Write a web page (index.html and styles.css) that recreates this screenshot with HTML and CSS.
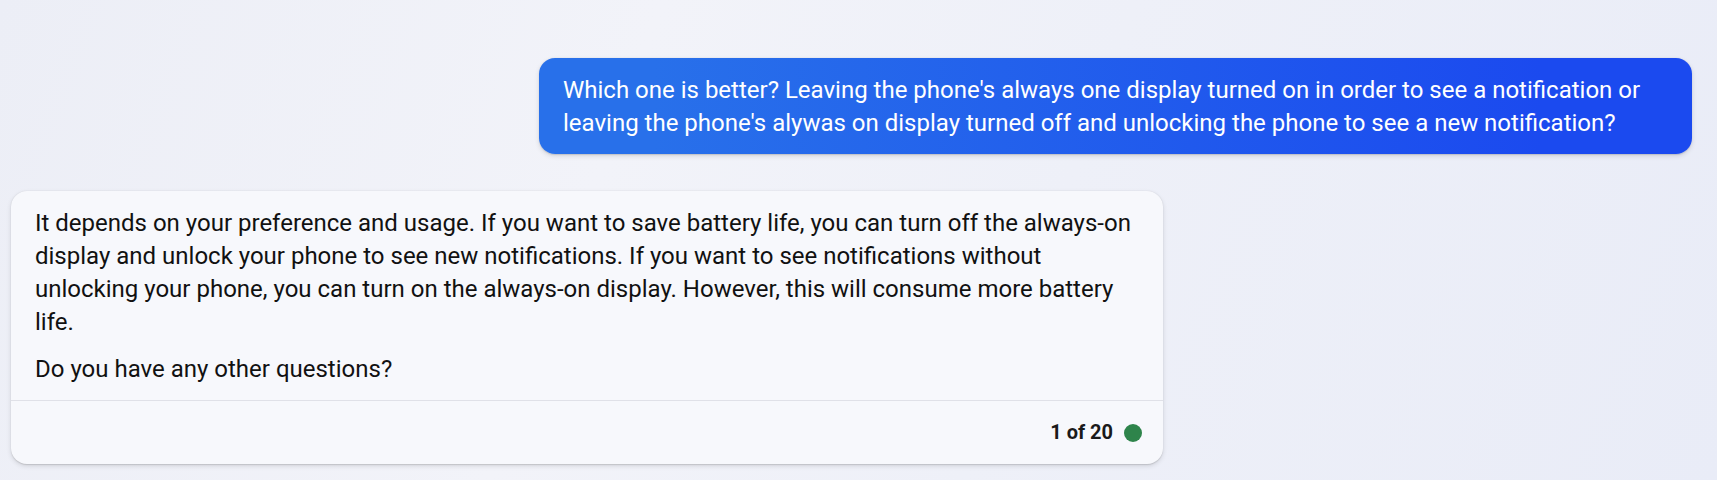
FILE: index.html
```html
<!DOCTYPE html>
<html lang="en">
<head>
    <meta charset="UTF-8">
    <meta name="viewport" content="width=device-width, initial-scale=1.0">
    <title>Chat</title>
    <link rel="stylesheet" href="styles.css">
</head>
<body>
    <div class="chat">
        <div class="msg user">
            Which one is better? Leaving the phone's always one display turned on in order to see a notification or leaving the phone's alywas on display turned off and unlocking the phone to see a new notification?
        </div>

        <div class="msg bot">
            <div class="content">
                <p>It depends on your preference and usage. If you want to save battery life, you can turn off the always-on display and unlock your phone to see new notifications. If you want to see notifications without unlocking your phone, you can turn on the always-on display. However, this will consume more battery life.</p>
                <p>Do you have any other questions?</p>
            </div>
            <div class="footer">
                <span class="count">1 of 20</span>
                <span class="dot"></span>
            </div>
        </div>
    </div>
</body>
</html>
```

FILE: styles.css
```css
html, body {
    height: 100%;
}
body {
    margin: 0;
    font-family: Roboto, 'Noto Sans', sans-serif;
    font-size: 24px;
    line-height: 33px;
    color: #111;
    background: linear-gradient(110deg, #eceef6 0%, #f2f3f9 35%, #eef0f8 60%, #e9ecf7 100%);
}
.chat {
    display: flex;
    flex-direction: column;
    gap: 37px;
    padding: 58px 25px 0 11px;
}
.msg {
    max-width: 1153px;
    box-sizing: border-box;
    border-radius: 16px;
    box-shadow: 0 0.4px 1.2px rgba(0,0,0,0.12), 0 2px 5px rgba(0,0,0,0.12);
}
.user {
    align-self: flex-end;
    padding: 16px 24px 14px;
    color: #fff;
    background: linear-gradient(90deg, #2870ea 10%, #1b4aef 87%);
}
.bot {
    align-self: flex-start;
    max-width: 1152px;
    background-color: #f7f8fc;
}
.content {
    padding: 16px 24px 14px;
}
.content p {
    margin: 0 0 14px;
}
.content p:last-child {
    margin-bottom: 0;
}
.footer {
    display: flex;
    justify-content: flex-end;
    align-items: center;
    gap: 11px;
    height: 63px;
    padding: 0 21px;
    border-top: 1px solid #e0e1e8;
}
.count {
    font-size: 20px;
    font-weight: 700;
    color: #1a1a1a;
}
.dot {
    width: 18px;
    height: 18px;
    border-radius: 50%;
    background-color: #2e844b;
}
```
